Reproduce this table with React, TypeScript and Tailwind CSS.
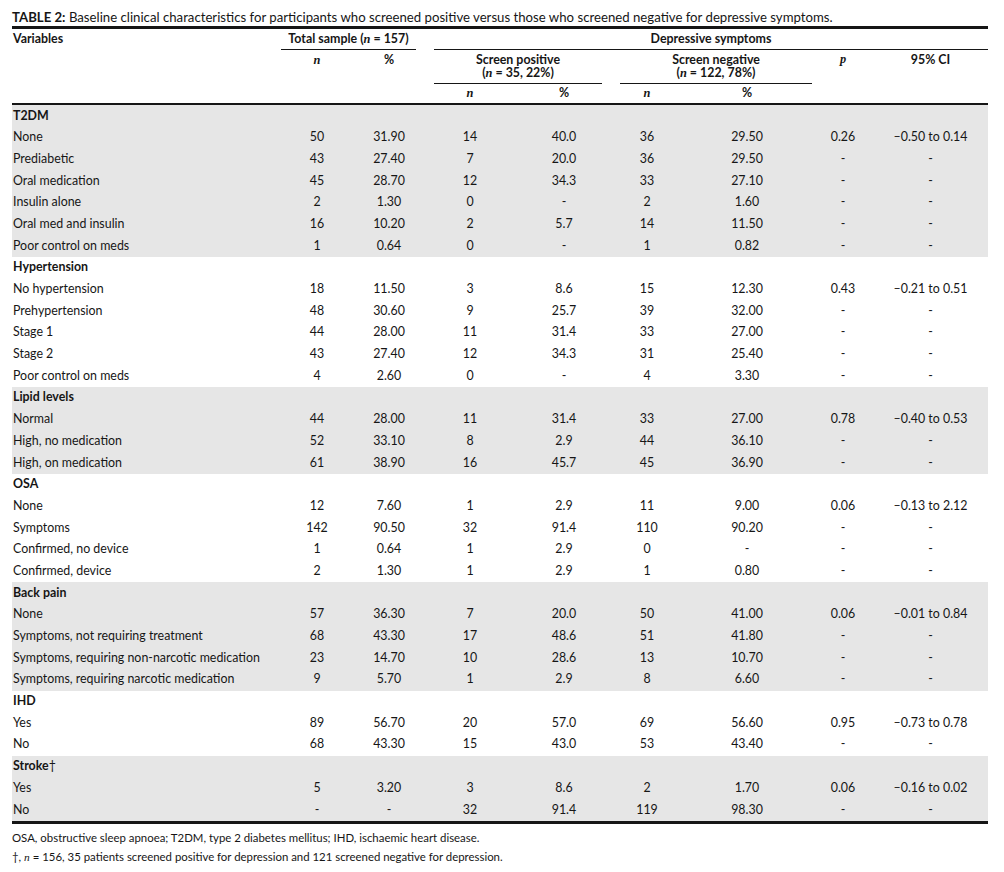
import React from 'react';

type Row = [string, string, string, string, string, string, string, string, string];

interface Group {
  title: string;
  dagger?: boolean;
  rows: Row[];
}

const groups: Group[] = [
  {
    title: 'T2DM',
    rows: [
      ['None', '50', '31.90', '14', '40.0', '36', '29.50', '0.26', '–0.50 to 0.14'],
      ['Prediabetic', '43', '27.40', '7', '20.0', '36', '29.50', '-', '-'],
      ['Oral medication', '45', '28.70', '12', '34.3', '33', '27.10', '-', '-'],
      ['Insulin alone', '2', '1.30', '0', '-', '2', '1.60', '-', '-'],
      ['Oral med and insulin', '16', '10.20', '2', '5.7', '14', '11.50', '-', '-'],
      ['Poor control on meds', '1', '0.64', '0', '-', '1', '0.82', '-', '-'],
    ],
  },
  {
    title: 'Hypertension',
    rows: [
      ['No hypertension', '18', '11.50', '3', '8.6', '15', '12.30', '0.43', '–0.21 to 0.51'],
      ['Prehypertension', '48', '30.60', '9', '25.7', '39', '32.00', '-', '-'],
      ['Stage 1', '44', '28.00', '11', '31.4', '33', '27.00', '-', '-'],
      ['Stage 2', '43', '27.40', '12', '34.3', '31', '25.40', '-', '-'],
      ['Poor control on meds', '4', '2.60', '0', '-', '4', '3.30', '-', '-'],
    ],
  },
  {
    title: 'Lipid levels',
    rows: [
      ['Normal', '44', '28.00', '11', '31.4', '33', '27.00', '0.78', '–0.40 to 0.53'],
      ['High, no medication', '52', '33.10', '8', '2.9', '44', '36.10', '-', '-'],
      ['High, on medication', '61', '38.90', '16', '45.7', '45', '36.90', '-', '-'],
    ],
  },
  {
    title: 'OSA',
    rows: [
      ['None', '12', '7.60', '1', '2.9', '11', '9.00', '0.06', '–0.13 to 2.12'],
      ['Symptoms', '142', '90.50', '32', '91.4', '110', '90.20', '-', '-'],
      ['Confirmed, no device', '1', '0.64', '1', '2.9', '0', '-', '-', '-'],
      ['Confirmed, device', '2', '1.30', '1', '2.9', '1', '0.80', '-', '-'],
    ],
  },
  {
    title: 'Back pain',
    rows: [
      ['None', '57', '36.30', '7', '20.0', '50', '41.00', '0.06', '–0.01 to 0.84'],
      ['Symptoms, not requiring treatment', '68', '43.30', '17', '48.6', '51', '41.80', '-', '-'],
      ['Symptoms, requiring non-narcotic medication', '23', '14.70', '10', '28.6', '13', '10.70', '-', '-'],
      ['Symptoms, requiring narcotic medication', '9', '5.70', '1', '2.9', '8', '6.60', '-', '-'],
    ],
  },
  {
    title: 'IHD',
    rows: [
      ['Yes', '89', '56.70', '20', '57.0', '69', '56.60', '0.95', '–0.73 to 0.78'],
      ['No', '68', '43.30', '15', '43.0', '53', '43.40', '-', '-'],
    ],
  },
  {
    title: 'Stroke',
    dagger: true,
    rows: [
      ['Yes', '5', '3.20', '3', '8.6', '2', '1.70', '0.06', '–0.16 to 0.02'],
      ['No', '-', '-', '32', '91.4', '119', '98.30', '-', '-'],
    ],
  },
];

// same column template for header and body so the centres line up
const cols = 'grid grid-cols-[269px_72px_72px_90px_98px_68px_132px_60px_115px]';

function N() {
  return <span className="font-['Liberation_Serif',serif] italic">n</span>;
}

function GroupBlock({ group, shaded }: { group: Group; shaded: boolean }) {
  return (
    <div className={shaded ? 'bg-[#e6e6e6]' : ''}>
      <div className={`${cols} h-[21.7px] items-center`}>
        <div className="pl-px font-bold">
          {group.title}
          {group.dagger && <span className="font-normal">†</span>}
        </div>
      </div>
      {group.rows.map((r, i) => (
        <div key={i} className={`${cols} h-[21.7px] items-center`}>
          <div className="pl-px">{r[0]}</div>
          {r.slice(1).map((v, j) => (
            <div key={j} className="text-center">
              {v}
            </div>
          ))}
        </div>
      ))}
    </div>
  );
}

export default function App() {
  return (
    <div className="w-[1004px] h-[872px] bg-white px-[12px] pt-[8px] font-['Lato','Open_Sans',sans-serif] text-[12.4px] text-[#161616]">
      <div className="w-[976px]">
        <p className="leading-[18px] text-[13.2px]">
          <span className="font-bold">TABLE 2:</span> Baseline clinical characteristics for participants who screened
          positive versus those who screened negative for depressive symptoms.
        </p>
        <div className="border-t-[3px] border-[#161616]" />

        {/* header, row A */}
        <div className={`${cols} h-[19px] font-bold leading-[19px]`}>
          <div className="pl-px">Variables</div>
          <div className="col-span-2 mr-[9px] border-b border-[#161616] text-center">
            Total sample (<N /> = 157)
          </div>
          <div className="col-span-6 ml-[9px] border-b border-[#161616] text-center">Depressive symptoms</div>
        </div>

        {/* header, row B */}
        <div className={`${cols} h-[36px] font-bold leading-[13px]`}>
          <div />
          <div className="pt-[5px] text-center"><N /></div>
          <div className="pt-[5px] text-center">%</div>
          <div className="col-span-2 ml-[9px] mr-[11px] border-b border-[#161616] pt-[5px] text-center">
            Screen positive
            <br />
            (<N /> = 35, 22%)
          </div>
          <div className="col-span-2 ml-[7px] mr-px border-b border-[#161616] pt-[5px] text-center">
            Screen negative
            <br />
            (<N /> = 122, 78%)
          </div>
          <div className="pt-[5px] text-center font-['Liberation_Serif',serif] italic">p</div>
          <div className="pt-[5px] text-center">95% CI</div>
        </div>

        {/* header, row C */}
        <div className={`${cols} h-[19px] font-bold leading-[18px]`}>
          <div />
          <div />
          <div />
          <div className="text-center"><N /></div>
          <div className="text-center">%</div>
          <div className="text-center"><N /></div>
          <div className="text-center">%</div>
        </div>
        <div className="border-t-2 border-[#161616]" />

        {groups.map((g, i) => (
          <GroupBlock key={g.title} group={g} shaded={i % 2 === 0} />
        ))}
        <div className="border-t-[3px] border-[#161616]" />

        <div className="pt-[4px] text-[11.4px] leading-[19px]">
          <p>OSA, obstructive sleep apnoea; T2DM, type 2 diabetes mellitus; IHD, ischaemic heart disease.</p>
          <p>
            †, <N /> = 156, 35 patients screened positive for depression and 121 screened negative for depression.
          </p>
        </div>
      </div>
    </div>
  );
}
